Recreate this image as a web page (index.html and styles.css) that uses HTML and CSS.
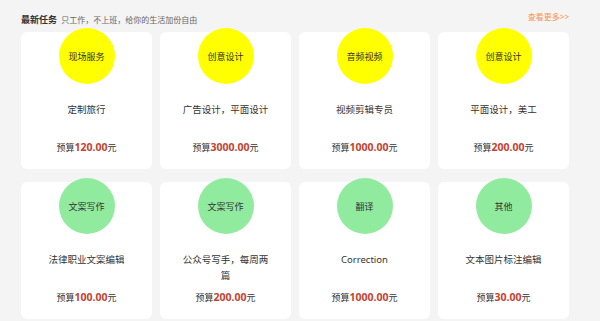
FILE: index.html
```html
<!DOCTYPE html>
<html lang="zh-CN">
<head>
  <meta charset="UTF-8">
  <meta name="viewport" content="width=device-width, initial-scale=1.0">
  <title>最新任务</title>
  <link rel="stylesheet" href="styles.css">
</head>
<body>
  <div class="task-section">
    <div class="section-head">
      <div class="head-left">
        <span class="head-title">最新任务</span>
        <span class="head-sub">只工作，不上班，给你的生活加份自由</span>
      </div>
      <a class="more-link" href="#">查看更多&gt;&gt;</a>
    </div>

    <div class="task-grid">
      <div class="task-card">
        <div class="task-tag yellow">现场服务</div>
        <div class="task-title">定制旅行</div>
        <div class="task-price">预算<b>120.00</b>元</div>
      </div>
      <div class="task-card">
        <div class="task-tag yellow">创意设计</div>
        <div class="task-title">广告设计，平面设计</div>
        <div class="task-price">预算<b>3000.00</b>元</div>
      </div>
      <div class="task-card">
        <div class="task-tag yellow">音频视频</div>
        <div class="task-title">视频剪辑专员</div>
        <div class="task-price">预算<b>1000.00</b>元</div>
      </div>
      <div class="task-card">
        <div class="task-tag yellow">创意设计</div>
        <div class="task-title">平面设计，美工</div>
        <div class="task-price">预算<b>200.00</b>元</div>
      </div>

      <div class="task-card">
        <div class="task-tag green">文案写作</div>
        <div class="task-title">法律职业文案编辑</div>
        <div class="task-price">预算<b>100.00</b>元</div>
      </div>
      <div class="task-card">
        <div class="task-tag green">文案写作</div>
        <div class="task-title">公众号写手，每周两篇</div>
        <div class="task-price">预算<b>200.00</b>元</div>
      </div>
      <div class="task-card">
        <div class="task-tag green">翻译</div>
        <div class="task-title">Correction</div>
        <div class="task-price">预算<b>1000.00</b>元</div>
      </div>
      <div class="task-card">
        <div class="task-tag green">其他</div>
        <div class="task-title">文本图片标注编辑</div>
        <div class="task-price">预算<b>30.00</b>元</div>
      </div>
    </div>
  </div>
</body>
</html>
```

FILE: styles.css
```css
body {
  margin: 0;
  background-color: #f4f4f4;
  font-family: "Noto Sans", "Noto Sans CJK SC", sans-serif;
  color: #333;
}

.task-section {
  width: 548px;
  padding: 9px 0 0 21px;
}

.section-head {
  display: flex;
  justify-content: space-between;
  align-items: center;
  height: 16px;
  margin-bottom: 7px;
}

.head-title {
  font-size: 9px;
  font-weight: bold;
  color: #333;
}

.head-sub {
  font-size: 8px;
  color: #666;
}

.more-link {
  font-size: 8px;
  color: #f7954f;
  text-decoration: none;
  margin-top: -2px;
}

.task-grid {
  display: grid;
  grid-template-columns: repeat(4, 131px);
  column-gap: 8px;
  row-gap: 13px;
}

.task-card {
  height: 137px;
  background-color: white;
  border-radius: 6px;
  text-align: center;
  display: flex;
  flex-direction: column;
  align-items: center;
}

.task-tag {
  width: 56px;
  height: 56px;
  margin-top: -4px;
  border-radius: 50%;
  display: flex;
  align-items: center;
  justify-content: center;
  font-size: 9px;
  color: #333;
}

.task-tag.yellow {
  background-color: #ffff00;
}

.task-tag.green {
  background-color: #90eb9f;
}

.task-title {
  width: 88px;
  height: 32px;
  margin-top: 18px;
  font-size: 9.5px;
  line-height: 16px;
  color: #333;
}

.task-price {
  margin-top: 5px;
  font-size: 9px;
  line-height: 16px;
  color: #333;
}

.task-price b {
  font-size: 10.5px;
  color: #c2432f;
}
```
